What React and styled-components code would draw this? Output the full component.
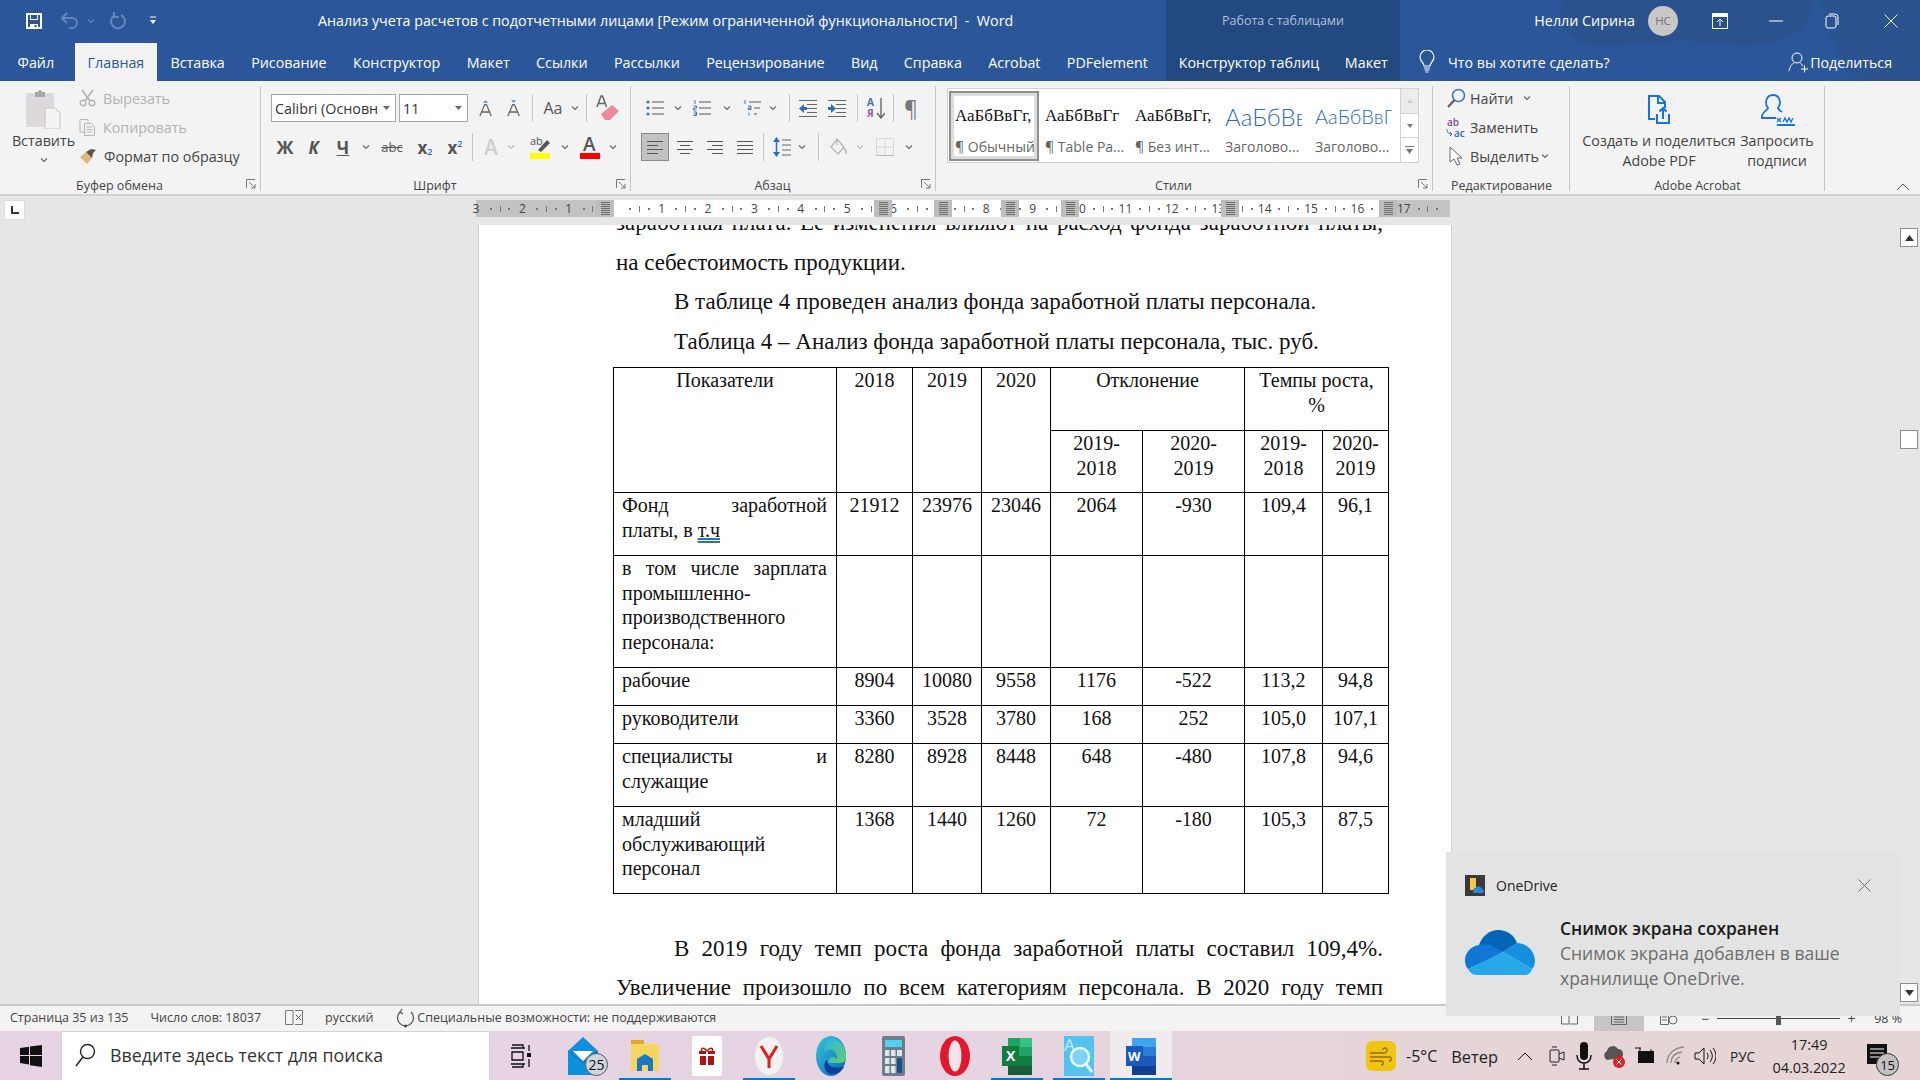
import React from 'react'
import styled, { createGlobalStyle } from 'styled-components'

const UI = `'Open Sans', 'Noto Sans', sans-serif`
const SERIF = `'Liberation Serif', 'Times New Roman', serif`

const Global = createGlobalStyle`
  html, body { margin: 0; padding: 0; background: #e6e6e6; }
  * { box-sizing: border-box; }
`

const Screen = styled.div`
  position: relative;
  width: 1920px;
  height: 1080px;
  overflow: hidden;
  display: flex;
  flex-direction: column;
  font-family: ${UI};
  color: #444;
`

/* ---------- window header ---------- */
const Header = styled.header`
  position: relative;
  height: 81px;
  flex: none;
  background: #2b579a;
  color: #fff;
`
const HeaderArt = styled.svg`
  position: absolute;
  right: 0;
  top: 0;
  pointer-events: none;
`
const TitleRow = styled.div`
  position: relative;
  display: flex;
  height: 43px;
  align-items: stretch;
`
const TabsRow = styled.nav`
  position: relative;
  display: flex;
  height: 38px;
  align-items: stretch;
  font-size: 14.3px;
`
const Qat = styled.div`
  width: 318px;
  display: flex;
  align-items: center;
  padding: 0 0 2px 26px;
  flex: none;
`
const QatItem = styled.span`
  display: flex;
  margin-left: ${p => p.$ml ?? 0}px;
`
const DocTitle = styled.div`
  width: 848px;
  font-size: 14.3px;
  display: flex;
  align-items: center;
  padding-bottom: 2px;
  white-space: nowrap;
  flex: none;
`
const ContextCell = styled.div`
  width: 234px;
  flex: none;
  background: #234a80;
  display: flex;
  align-items: center;
  justify-content: center;
  font-size: 12.5px;
  padding-bottom: 2px;
  color: #aebfd8;
  white-space: nowrap;
`
const ContextTabs = styled(ContextCell)`
  justify-content: flex-start;
  font-size: 14.3px;
  padding-bottom: 0;
  color: #fff;
`
const WinRight = styled.div`
  flex: 1;
  display: flex;
  align-items: center;
  justify-content: flex-end;
  padding-bottom: 2px;
  font-size: 14.3px;
`
const UserName = styled.span`
  margin-right: 13px;
  white-space: nowrap;
`
const Avatar = styled.span`
  width: 30px;
  height: 30px;
  border-radius: 50%;
  background: #c8c8c8;
  color: #757575;
  font-size: 11.5px;
  display: flex;
  align-items: center;
  justify-content: center;
  margin-right: 12px;
`
const WinBtn = styled.span`
  width: ${p => p.$w}px;
  display: flex;
  justify-content: center;
`
const Tab = styled.span`
  padding: 0 ${p => p.$pad ?? 13.2}px;
  margin-right: ${p => p.$mr ?? 0}px;
  display: flex;
  align-items: center;
  white-space: nowrap;
  flex: none;
  ${p => p.$active && `background: #f3f3f3; color: #2b579a; font-weight: 500;`}
`
const TabList = styled.div`
  width: 1166px;
  flex: none;
  display: flex;
  padding-left: 4px;
`
const TellMe = styled.div`
  flex: 1;
  display: flex;
  align-items: center;
  padding-left: 19px;
  gap: 13px;
  font-size: 14.2px;
  white-space: nowrap;
`
const Share = styled.span`
  margin-left: auto;
  margin-right: 28px;
  display: flex;
  align-items: center;
  gap: 2px;
`

/* ---------- ribbon ---------- */
const Ribbon = styled.section`
  position: relative;
  display: flex;
  height: 115px;
  flex: none;
  background: #f3f3f3;
  border-bottom: 2px solid #d4d4d4;
`
const Group = styled.div`
  width: ${p => p.$w}px;
  flex: none;
  position: relative;
  display: flex;
  flex-direction: column;
  padding-top: 5px;
  &::after {
    content: '';
    position: absolute;
    right: 0;
    top: 5px;
    bottom: 3px;
    width: 1px;
    background: #c6c6c6;
  }
`
const GroupBody = styled.div`
  flex: 1;
  display: flex;
  min-height: 0;
  padding-left: ${p => p.$left ?? 0}px;
`
const GroupLabel = styled.div`
  height: 17px;
  display: flex;
  align-items: center;
  justify-content: center;
  font-size: 12.5px;
  color: #444;
  white-space: nowrap;
  padding-right: ${p => p.$shift ?? 0}px;
`
const Launcher = styled.svg`
  position: absolute;
  right: 5px;
  bottom: 5px;
`
const PasteCol = styled.div`
  width: 79px;
  flex: none;
  display: flex;
  flex-direction: column;
  align-items: center;
  padding: 3px 0 0 8px;
  font-size: 14.3px;
  line-height: 20px;
`
const PasteLabel = styled.span`
  margin-top: 2px;
  margin-bottom: 5px;
`
const Stack = styled.div`
  display: flex;
  flex-direction: column;
  padding-top: ${p => p.$top ?? 0}px;
  gap: 5px;
`
const SmallAction = styled.div`
  display: flex;
  align-items: center;
  height: 24px;
  font-size: 14.3px;
  gap: ${p => p.$gap ?? 7}px;
  white-space: nowrap;
  color: ${p => (p.$off ? '#b2b2b2' : '#444')};
`
const IconSlot = styled.span`
  width: ${p => p.$w ?? 18}px;
  display: flex;
  justify-content: center;
  flex: none;
`
const TwoRows = styled.div`
  display: flex;
  flex-direction: column;
  padding: 8px 0 0 ${p => p.$left ?? 0}px;
  gap: 11px;
`
const ToolRow = styled.div`
  display: flex;
  align-items: center;
  height: 28px;
`
const Combo = styled.div`
  width: ${p => p.$w}px;
  height: 28px;
  flex: none;
  margin-right: ${p => p.$mr ?? 0}px;
  background: #fff;
  border: 1px solid #a6a6a6;
  display: flex;
  align-items: center;
  justify-content: space-between;
  padding: 0 4px 0 3px;
  font-size: 14.3px;
  color: #333;
  white-space: nowrap;
  overflow: hidden;
`
const Tool = styled.span`
  width: ${p => p.$w ?? 28}px;
  height: 28px;
  flex: none;
  display: flex;
  align-items: center;
  justify-content: center;
  margin-left: ${p => p.$ml ?? 0}px;
  color: ${p => p.$color ?? '#555'};
  ${p => p.$active && `background: #c2c2c2; border: 1px solid #8a8a8a;`}
`
const Sep = styled.span`
  width: 1px;
  height: 28px;
  flex: none;
  background: #c6c6c6;
  margin-left: ${p => p.$l ?? 4}px;
  margin-right: ${p => p.$r ?? 4}px;
`
const Glyph = styled.span`
  font-family: ${UI};
  font-weight: ${p => p.$weight ?? 700};
  font-style: ${p => (p.$italic ? 'italic' : 'normal')};
  font-size: ${p => p.$size ?? 16}px;
  color: ${p => p.$color ?? '#555'};
  text-decoration: ${p => p.$deco ?? 'none'};
  line-height: 1;
  display: inline-flex;
  align-items: center;
`
const Sub = styled.span`
  font-size: 9px;
  color: #2b6cb0;
  font-weight: 600;
  align-self: ${p => (p.$up ? 'flex-start' : 'flex-end')};
`

/* styles gallery */
const Gallery = styled.div`
  margin: 2px 0 0 11px;
  width: 472px;
  height: 75px;
  background: #fff;
  border: 1px solid #d2d2d2;
  display: flex;
  padding: 2px 0 0 1px;
`
const StyleItem = styled.div`
  width: 90px;
  height: 70px;
  flex: none;
  display: flex;
  flex-direction: column;
  padding: ${p => (p.$active ? '0 2px 0 4px' : '2px 4px 0 6px')};
  overflow: hidden;
  white-space: nowrap;
  ${p => p.$active && `border: 2px solid #8f8f8f; outline: 3px solid #dcdcdc; outline-offset: -5px;`}
`
const StylePreview = styled.div`
  height: 43px;
  width: 77px;
  padding-top: 3px;
  display: flex;
  align-items: center;
  overflow: hidden;
  flex: none;
  font-family: ${p => (p.$heading ? `Lato, sans-serif` : SERIF)};
  font-weight: ${p => (p.$heading ? 300 : 400)};
  font-size: ${p => p.$size}px;
  color: ${p => (p.$heading ? '#2f6bb5' : '#111')};
`
const StyleName = styled.div`
  font-size: 14px;
  color: #666;
  overflow: hidden;
  line-height: 22px;
`
const GalleryScroll = styled.div`
  margin-left: auto;
  width: 18px;
  flex: none;
  margin-top: -2px;
  display: flex;
  flex-direction: column;
  border-left: 1px solid #d2d2d2;
`
const ScrollCell = styled.div`
  flex: 1;
  display: flex;
  align-items: center;
  justify-content: center;
  background: ${p => (p.$off ? '#ececec' : '#fff')};
  border-bottom: 1px solid #d2d2d2;
  &:last-child { border-bottom: none; }
`
const BigBtn = styled.div`
  width: ${p => p.$w}px;
  flex: none;
  display: flex;
  flex-direction: column;
  align-items: center;
  font-size: 14.3px;
  line-height: 20px;
  padding-top: 7px;
  text-align: center;
  white-space: nowrap;
`
const BigIcon = styled.div`
  height: 35px;
  margin-bottom: 3px;
  display: flex;
  align-items: center;
`
const Collapse = styled.svg`
  position: absolute;
  right: 10px;
  bottom: 3px;
`

/* ---------- ruler ---------- */
const RulerRow = styled.div`
  height: 29px;
  flex: none;
  background: #e6e6e6;
  display: flex;
  align-items: flex-start;
  padding-top: 4px;
`
const TabStop = styled.div`
  width: 21px;
  height: 20px;
  margin-left: 4px;
  margin-right: 451px;
  background: #fff;
  border: 1px solid #dcdcdc;
  display: flex;
  align-items: center;
  justify-content: center;
`
const Ruler = styled.div`
  position: relative;
  width: 974px;
  height: 17px;
  display: flex;
  background: linear-gradient(to right, #c3c3c3 0, #c3c3c3 136px, #fff 136px, #fff 913px, #c3c3c3 913px);
  font-size: 12px;
  color: #444;
`
const Cm = styled.span`
  width: 46.4px;
  flex: none;
  display: flex;
  align-items: center;
  justify-content: space-between;
  padding-right: 6px;
  &:first-child { margin-left: -6px; }
`
const RulerNum = styled.span`
  width: 12px;
  display: flex;
  justify-content: center;
  line-height: 17px;
`
const Tick = styled.i`
  width: ${p => (p.$tall ? 1 : 2)}px;
  height: ${p => (p.$tall ? 6 : 2)}px;
  background: #777;
`
const ColMark = styled.span`
  position: absolute;
  top: 0;
  bottom: 0;
  width: 18px;
  background: #bdbdbd;
  display: flex;
  align-items: center;
  justify-content: center;
  &::after {
    content: '';
    width: 9px;
    height: 13px;
    background: repeating-linear-gradient(0deg, #6f6f6f 0 1px, #bbb 1px 2px);
  }
`

/* ---------- document ---------- */
const DocArea = styled.main`
  height: 779px;
  flex: none;
  display: flex;
  background: #e6e6e6;
  overflow: hidden;
`
const Page = styled.article`
  width: 974px;
  margin-left: 478px;
  flex: none;
  background: #fff;
  border-left: 1px solid #d0d0d0;
  border-right: 1px solid #d0d0d0;
  padding-left: 137px;
  padding-right: 68px;
  font-family: ${SERIF};
  color: #111;
  font-size: 23px;
  overflow: hidden;
`
const Para = styled.p`
  margin: ${p => p.$mt ?? 0}px 0 0;
  height: 39.5px;
  line-height: 39.5px;
  white-space: nowrap;
  text-indent: ${p => (p.$indent ? 58 : 0)}px;
  ${p => p.$just && `white-space: normal; text-align: justify; text-align-last: justify;`}
`
const Table = styled.table`
  width: 775px;
  margin: 6px 0 0 -3px;
  border-collapse: collapse;
  table-layout: fixed;
  font-size: 20px;
  line-height: 24.6px;
`
const Cell = styled.td`
  border: 1px solid #000;
  padding: 0 9px;
  vertical-align: top;
  text-align: ${p => (p.$left ? 'justify' : 'center')};
`
const NameCell = styled(Cell)`
  padding-left: 8px;
`
const NumCell = styled(Cell)`
  padding-left: 2px;
  padding-right: 2px;
`
const Row = styled.tr`
  height: ${p => p.$h}px;
`
const Spell = styled.span`
  text-decoration: underline double #2b6cc4;
`
const ScrollBar = styled.aside`
  width: 18px;
  margin-left: auto;
  margin-right: 2px;
  flex: none;
  display: flex;
  flex-direction: column;
  padding: 3px 0 2px;
`
const ScrollBtn = styled.div`
  height: 19px;
  background: #fff;
  border: 1px solid #8e8e8e;
  display: flex;
  align-items: center;
  justify-content: center;
  margin-top: ${p => (p.$auto ? 'auto' : `${p.$mt ?? 0}px`)};
`

/* ---------- status bar ---------- */
const StatusBar = styled.footer`
  height: 27px;
  flex: none;
  background: #f3f3f3;
  border-top: 2px solid #c8c8c8;
  display: flex;
  align-items: center;
  padding: 0 0 2px 10px;
  font-size: 12.5px;
  color: #444;
  white-space: nowrap;
`
const StatusItem = styled.span`
  margin-left: ${p => p.$ml ?? 0}px;
  display: flex;
  align-items: center;
`
const StatusRight = styled.div`
  margin-left: auto;
  margin-bottom: -2px;
  height: calc(100% + 2px);
  display: flex;
  align-items: center;
  padding-right: 18px;
`
const ViewBtn = styled.span`
  width: 50px;
  height: 100%;
  display: flex;
  align-items: center;
  justify-content: center;
  background: ${p => (p.$active ? '#c6c6c6' : 'transparent')};
`
const ZoomSign = styled.span`
  width: 11px;
  margin-left: 6px;
  display: flex;
  justify-content: center;
  font-size: 14px;
  line-height: 1;
`
const Zoomer = styled.span`
  width: 123px;
  height: 1px;
  background: #444;
  margin-left: 6px;
  display: flex;
  justify-content: center;
  align-items: center;
  &::after {
    content: '';
    width: 5px;
    height: 12px;
    background: #555;
  }
`

/* ---------- taskbar ---------- */
const Taskbar = styled.div`
  height: 50px;
  flex: none;
  display: flex;
  background: linear-gradient(to right, #e6d3e4 0, #e6d4e2 50%, #e5d5d6 80%, #e5d5d5 100%);
  color: #222;
`
const StartBtn = styled.div`
  width: 61px;
  flex: none;
  display: flex;
  align-items: center;
  justify-content: center;
`
const Search = styled.div`
  width: 429px;
  flex: none;
  background: #fff;
  border: 1px solid #d8d0d8;
  display: flex;
  align-items: center;
  padding: 0 0 2px 12px;
  gap: 14px;
  font-size: 17.8px;
  color: #333;
  white-space: nowrap;
`
const TaskView = styled.div`
  width: 62px;
  flex: none;
  display: flex;
  align-items: center;
  justify-content: center;
`
const Slot = styled.div`
  position: relative;
  width: 62px;
  flex: none;
  display: flex;
  align-items: center;
  justify-content: center;
  background: ${p => (p.$focus ? '#f2ebed' : 'transparent')};
  &::after {
    content: '';
    position: absolute;
    bottom: 0;
    left: ${p => (p.$focus ? 0 : 5)}px;
    right: ${p => (p.$focus ? 0 : 5)}px;
    height: 3px;
    background: ${p => (p.$on ? '#0078d4' : 'transparent')};
  }
`
const Badge = styled.span`
  position: absolute;
  right: 6px;
  bottom: 5px;
  width: 23px;
  height: 23px;
  border-radius: 50%;
  background: #cfd6de;
  border: 1px solid #555;
  font-size: 14px;
  color: #111;
  display: flex;
  align-items: center;
  justify-content: center;
`
const Tray = styled.div`
  flex: 1;
  display: flex;
  align-items: center;
  padding-left: 194px;
`
const Weather = styled.div`
  width: 30px;
  height: 30px;
  background: #f1c40f;
  border-radius: 6px;
  flex: none;
  display: flex;
  align-items: center;
  justify-content: center;
  margin-right: 10px;
`
const TrayText = styled.span`
  font-size: ${p => p.$size ?? 16}px;
  margin-left: ${p => p.$ml ?? 0}px;
  white-space: nowrap;
`
const TrayIcon = styled.span`
  width: ${p => p.$w ?? 31}px;
  margin-left: ${p => p.$ml ?? 0}px;
  flex: none;
  display: flex;
  justify-content: center;
`
const Clock = styled.div`
  width: 88px;
  margin-left: 10px;
  flex: none;
  text-align: center;
  font-size: 14.4px;
  line-height: 23px;
`
const Notif = styled.span`
  position: relative;
  margin-left: 14px;
  display: flex;
`
const NotifCount = styled.span`
  position: absolute;
  left: 9px;
  top: 9px;
  width: 23px;
  height: 23px;
  border-radius: 50%;
  background: #c5c0c4;
  border: 1px solid #333;
  font-size: 13px;
  color: #111;
  display: flex;
  align-items: center;
  justify-content: center;
`

/* ---------- toast ---------- */
const Toast = styled.div`
  position: absolute;
  left: 1446px;
  top: 852px;
  width: 454px;
  height: 164px;
  background: #e3e3e3;
  padding: 23px 0 0 19px;
  color: #222;
`
const ToastHead = styled.div`
  display: flex;
  align-items: center;
  gap: 11px;
  font-size: 14px;
  height: 20px;
`
const ToastClose = styled.svg`
  margin-left: auto;
  margin-right: 29px;
`
const ToastBody = styled.div`
  display: flex;
  gap: 25px;
  margin-top: 21px;
`
const ToastCloud = styled.div`
  margin-top: 13px;
  flex: none;
`
const ToastTitle = styled.div`
  font-size: 17.3px;
  font-weight: 600;
  color: #1a1a1a;
  line-height: 25px;
  white-space: nowrap;
`
const ToastText = styled.div`
  font-size: 17.5px;
  color: #6d6d6d;
  line-height: 25px;
  white-space: nowrap;
`

/* ---------- icons ---------- */
const Chev = ({ color = '#666', size = 8 }) => (
  <svg width={size} height={size} viewBox="0 0 8 8"><path d="M1 2.500 4 5.500 7 2.500" fill="none" stroke={color} strokeWidth="1.100" /></svg>
)
const CaretDown = ({ color = '#666' }) => (
  <svg width="9" height="6" viewBox="0 0 9 6"><path d="M1 1h7L4.500 5z" fill={color} /></svg>
)
const DialogLaunch = () => (
  <Launcher width="10" height="10" viewBox="0 0 10 10"><path d="M.5 9V.5H9M3 3l6 6M9 5v4H5" fill="none" stroke="#777" strokeWidth="1" /></Launcher>
)
const Save = () => (
  <svg width="16" height="16" viewBox="0 0 16 16"><path d="M1 1h14v14H1z" fill="none" stroke="#fff" strokeWidth="2" /><path d="M4 1h8v6H4zM4 11h8v4H4z" fill="#fff" /><path d="M8.500 12h2v2h-2z" fill="#2b579a" /><path d="M5 2h6v4H5z" fill="#2b579a" /></svg>
)
const Undo = () => (
  <svg width="20" height="18" viewBox="0 0 20 18"><path d="M3 6h9a5 5 0 0 1 0 10H9" fill="none" stroke="#6487bb" strokeWidth="2" /><path d="M7 1 2 6l5 5" fill="none" stroke="#6487bb" strokeWidth="2" /></svg>
)
const Redo = () => (
  <svg width="18" height="18" viewBox="0 0 18 18"><path d="M12 3a7 7 0 1 1-6 0" fill="none" stroke="#6487bb" strokeWidth="2.200" /><path d="M5 0v5h5" fill="none" stroke="#6487bb" strokeWidth="2" /></svg>
)
const QatMore = () => (
  <svg width="8" height="9" viewBox="0 0 8 9"><path d="M1 1h6" stroke="#fff" /><path d="M1 4h6L4 8z" fill="#fff" /></svg>
)
const RibbonDisplay = () => (
  <svg width="16" height="16" viewBox="0 0 16 16"><path d="M.5.5h15v15H.5z" fill="none" stroke="#fff" /><path d="M1 1h14v3H1z" fill="#fff" /><path d="M8 13V6M5 9l3-3 3 3" fill="none" stroke="#fff" /></svg>
)
const Minimize = () => <svg width="14" height="2" viewBox="0 0 14 2"><path d="M0 1h14" stroke="#fff" /></svg>
const Restore = () => (
  <svg width="14" height="16" viewBox="0 0 14 16"><rect x="1" y="3" width="10" height="12" rx="2" fill="none" stroke="#fff" /><path d="M4 1h6a3 3 0 0 1 3 3v8" fill="none" stroke="#fff" /></svg>
)
const CloseX = ({ color = '#fff', size = 14 }) => (
  <svg width={size} height={size} viewBox="0 0 14 14"><path d="M.5.5l13 13M13.500.5l-13 13" stroke={color} /></svg>
)
const Bulb = () => (
  <svg width="16" height="24" viewBox="0 0 16 24"><path d="M5 16c0-3-4-5-4-9a7 7 0 0 1 14 0c0 4-4 6-4 9z" fill="none" stroke="#fff" strokeWidth="1.200" /><path d="M5 18h6M5.500 20h5M6.500 22h3" stroke="#fff" /></svg>
)
const ShareIcon = () => (
  <svg width="20" height="22" viewBox="0 0 20 22"><circle cx="9" cy="7" r="5" fill="none" stroke="#fff" /><path d="M1 20c1-5 3-7 5-8M12 12c1 .5 2 1.500 3 3M13 18h7M16.500 14.500v7" fill="none" stroke="#fff" /></svg>
)
const PasteIcon = () => (
  <svg width="36" height="40" viewBox="0 0 36 40"><path d="M0 4h28v34H0z" fill="#dcd8dc" /><path d="M9 3h3a2 2 0 0 1 4 0h3v5H9z" fill="#a9a6a9" /><path d="M19 19h10l5 5v16H19z" fill="#f4f2f4" stroke="#c6c4c6" /></svg>
)
const Scissors = () => (
  <svg width="17" height="18" viewBox="0 0 17 18"><circle cx="4" cy="14" r="2.800" fill="none" stroke="#b4b4b4" strokeWidth="1.400" /><circle cx="13" cy="14" r="2.800" fill="none" stroke="#b4b4b4" strokeWidth="1.400" /><path d="M3 1l8 11M14 1 6 12" stroke="#b4b4b4" strokeWidth="1.800" /></svg>
)
const CopyIcon = () => (
  <svg width="17" height="17" viewBox="0 0 17 17"><path d="M1 .5h8v3M1 .5V13h4" fill="none" stroke="#b4b4b4" /><path d="M5.500 4.500h7l3 3v9h-10zM7.500 8h6M7.500 10.500h6M7.500 13h6" fill="none" stroke="#b4b4b4" /></svg>
)
const Brush = () => (
  <svg width="18" height="17" viewBox="0 0 18 17"><path d="M1 9l6-5 6 6-5 6z" fill="#e3b56e" /><path d="M7 4l5-3 5 1-3 3-1 5z" fill="#555" /></svg>
)
const FontGrow = ({ up }) => (
  <svg width="14" height="19" viewBox="0 0 16 19">
    <path d="M1 18 6.500 5h2L14 18M3.500 13.500h8" fill="none" stroke="#666" strokeWidth="1.500" />
    <path d={up ? 'M7.500 0l3 3h-6z' : 'M4.500 0h6l-3 3z'} fill="#5b8ac5" />
  </svg>
)
const Eraser = () => (
  <svg width="24" height="26" viewBox="0 0 24 26"><path d="M1 12 5 1h1.500l4 11M2.500 8.500h6.500" fill="none" stroke="#666" strokeWidth="1.500" /><path d="M5 19l11-9 7 6-9 9H9z" fill="#ea8a9a" /></svg>
)
const ListBullet = () => (
  <svg width="18" height="16" viewBox="0 0 18 16"><circle cx="2" cy="2" r="1.600" fill="#3f74b8" /><circle cx="2" cy="8" r="1.600" fill="#3f74b8" /><circle cx="2" cy="14" r="1.600" fill="#3f74b8" /><path d="M6 2h12M6 8h12M6 14h12" stroke="#555" /></svg>
)
const ListNumber = () => (
  <svg width="18" height="16" viewBox="0 0 18 16"><path d="M6 2h12M6 8h12M6 14h12" stroke="#555" /><path d="M2 .5v3.500M1 1.500l1-1M.5 6h3v2h-3v2h3M.5 12h3v3.500h-3M1 14h2" fill="none" stroke="#3f74b8" /></svg>
)
const ListMulti = () => (
  <svg width="18" height="16" viewBox="0 0 18 16"><path d="M6 2h12M11 8h6M11 14h3" stroke="#555" /><path d="M2 .5v3.500M1 1.500l1-1" fill="none" stroke="#3f74b8" /><path d="M5 6h3v3.500H5V8h3M6 12.500v3" fill="none" stroke="#3f74b8" /></svg>
)
const Indent = ({ out }) => (
  <svg width="18" height="17" viewBox="0 0 18 17">
    <path d="M0 .5h18M8 4.500h10M8 8.500h10M8 12.500h10M0 16.500h18" stroke="#666" />
    <path d={out ? 'M0 8.500 5 4v3h3v3H5v3z' : 'M8 8.500 3 4v3H0v3h3v3z'} fill="#2f6db5" />
  </svg>
)
const Sort = () => (
  <svg width="18" height="21" viewBox="0 0 18 21">
    <path d="M14 0v19M10 15l4 5 4-5" fill="none" stroke="#666" strokeWidth="1.400" />
    <text x="0" y="8" fontFamily="Open Sans" fontSize="10" fontWeight="700" fill="#3f74b8">A</text>
    <text x="0" y="19" fontFamily="Open Sans" fontSize="10" fontWeight="700" fill="#8a5cb0">Я</text>
  </svg>
)
const ALIGN_LINES = {
  left: 'M0 .5h16M0 4.500h11M0 8.500h16M0 12.500h11',
  center: 'M0 .5h16M3 4.500h10M0 8.500h16M3 12.500h10',
  right: 'M0 .5h16M5 4.500h11M0 8.500h16M5 12.500h11',
  just: 'M0 .5h16M0 4.500h16M0 8.500h16M0 12.500h16',
}
const Align = ({ mode }) => (
  <svg width="16" height="13" viewBox="0 0 16 13"><path d={ALIGN_LINES[mode]} stroke="#555" /></svg>
)
const LineSpacing = () => (
  <svg width="18" height="20" viewBox="0 0 18 20">
    <path d="M3.500 3v14" stroke="#2f6db5" strokeWidth="1.500" /><path d="M0 5l3.500-5L7 5zM0 15l3.500 5L7 15z" fill="#2f6db5" />
    <path d="M9 3h9M9 8h9M9 13h9M9 18h9" stroke="#666" />
  </svg>
)
const Shading = () => (
  <svg width="17" height="19" viewBox="0 0 17 19"><path d="M7 1 1 9l7 7 6-7zM7 1v6" fill="none" stroke="#b6b6b6" strokeWidth="1.300" /><path d="M14 10c2 3 3 4 2 6" fill="none" stroke="#b6b6b6" strokeWidth="1.500" /></svg>
)
const Borders = () => (
  <svg width="18" height="18" viewBox="0 0 18 18"><path d="M.5.5h17v17H.5zM9 .5v17M.5 9h17" fill="none" stroke="#c4b6c8" strokeDasharray="1 1" /><path d="M0 17.500h18" stroke="#b8b8b8" /></svg>
)
const Find = () => (
  <svg width="19" height="20" viewBox="0 0 19 20"><circle cx="11.500" cy="7.500" r="6" fill="none" stroke="#3f74b8" strokeWidth="1.600" /><path d="M7.500 12 1 19" stroke="#555" strokeWidth="2" /></svg>
)
const Replace = () => (
  <svg width="20" height="21" viewBox="0 0 20 21">
    <text x="1" y="9" fontFamily="Open Sans" fontSize="10" fontWeight="600" fill="#7a4b9c">ab</text>
    <text x="8" y="20" fontFamily="Open Sans" fontSize="10" fontWeight="600" fill="#2f6db5">ac</text>
    <path d="M1 12c0 4 2 5 5 5M4 15l2 2-2 2" fill="none" stroke="#2f6db5" />
  </svg>
)
const Pointer = () => (
  <svg width="14" height="20" viewBox="0 0 14 20"><path d="M1 1v15l4-3 3 6 3-1-3-6h5z" fill="#fff" stroke="#666" /></svg>
)
const AcrobatShare = () => (
  <svg width="24" height="32" viewBox="0 0 24 32"><path d="M8 24H2V1h10l6 6v6" fill="none" stroke="#1473e6" strokeWidth="2" /><path d="M11 1v7h7" fill="none" stroke="#1473e6" strokeWidth="2" /><path d="M10 19v9h12v-9M16 24V13M12.500 16.500 16 13l3.500 3.500" fill="none" stroke="#1473e6" strokeWidth="2" /></svg>
)
const AcrobatSign = () => (
  <svg width="36" height="34" viewBox="0 0 36 34"><path d="M3 22c0-4 5-5 6-8-3-3-3-13 5-13s8 10 5 13c1 2 2 3 4 4M3 22v2h14" fill="none" stroke="#1473e6" strokeWidth="1.800" /><path d="M18 31h18" stroke="#1473e6" strokeWidth="2" /><path d="M18 24l4 4M22 24l-4 4M24 28l2-4 2 4 2-4 2 4 2-4" fill="none" stroke="#1473e6" strokeWidth="1.300" /></svg>
)
const WinLogo = () => (
  <svg width="22" height="22" viewBox="0 0 22 22"><path d="M0 3l9-1.300V10H0zM10 1.600 22 0v10H10zM0 11h9v8.500L0 18zM10 11h12v11l-12-1.700z" fill="#111" /></svg>
)
const SearchIcon = () => (
  <svg width="22" height="24" viewBox="0 0 22 24"><circle cx="13.500" cy="8.500" r="7" fill="none" stroke="#222" strokeWidth="1.400" /><path d="M9 14 2 23" stroke="#222" strokeWidth="1.500" /></svg>
)
const TaskViewIcon = () => (
  <svg width="21" height="24" viewBox="0 0 21 24"><path d="M1 1h11v3M1 23h11v-3M1 8h11v8H1z" fill="none" stroke="#111" strokeWidth="1.300" /><path d="M0 4h14M0 20h14M18 1v6M18 15v8" stroke="#111" strokeWidth="1.300" /><rect x="16" y="9" width="4" height="4" fill="#111" /></svg>
)
const MailIcon = () => (
  <svg width="30" height="38" viewBox="0 0 30 38"><path d="M0 14 15 0l15 14v24H0z" fill="#0f8fe0" /><path d="M5 14h20L15 24z" fill="#fff" /><path d="M0 14l15 12 15-12" fill="none" stroke="#0a6cb8" /></svg>
)
const FolderIcon = () => (
  <svg width="28" height="32" viewBox="0 0 28 32"><path d="M0 0h13v5H0z" fill="#e0a52c" /><path d="M0 4h28v27H0z" fill="#f7d55e" /><path d="M6 31V19l8-5 8 5v12h-5v-6h-6v6z" fill="#1a78c8" /></svg>
)
const GiftIcon = () => (
  <svg width="30" height="40" viewBox="0 0 30 40"><path d="M0 0h30v40H0z" fill="#fff" /><path d="M7 15h16v3H7zM8 20h14v9H8z" fill="#b40f12" /><path d="M14 15h2v14h-2z" fill="#fff" /><path d="M15 15c-4-5-7-2-5 0M15 15c4-5 7-2 5 0" fill="none" stroke="#b40f12" strokeWidth="1.500" /></svg>
)
const YandexIcon = () => (
  <svg width="30" height="40" viewBox="0 0 30 40"><ellipse cx="15" cy="20" rx="14.500" ry="19.500" fill="#f4f2f0" stroke="#ddd" /><path d="M7 10l8 13v9M23 10l-8 13" fill="none" stroke="#e01b22" strokeWidth="3" /></svg>
)
const EdgeIcon = () => (
  <svg width="30" height="40" viewBox="0 0 30 40">
    <defs><linearGradient id="edg" x1="0" y1="0" x2="1" y2="1"><stop offset="0" stopColor="#36c6e0" /><stop offset="1" stopColor="#0f5fb4" /></linearGradient><linearGradient id="edg2" x1="0" y1="0" x2="1" y2="1"><stop offset="0" stopColor="#2bb5e8" /><stop offset="1" stopColor="#5fd06c" /></linearGradient></defs>
    <ellipse cx="15" cy="20" rx="15" ry="20" fill="url(#edg)" />
    <path d="M14 2c9 0 16 8 16 18 0 5-2 7-7 7H13c-1-7 6-8 8-3 1-8-6-14-13-8C9 8 11 3 14 2z" fill="url(#edg2)" />
    <path d="M11 24c0 6 6 9 17 7-4 6-11 9-16 6-4-3-5-10-1-13z" fill="#0b3f9a" />
  </svg>
)
const CalcIcon = () => (
  <svg width="23" height="40" viewBox="0 0 23 40"><rect width="23" height="40" rx="2" fill="#6f7d8a" /><path d="M3 4h17v7H3z" fill="#52d0ee" /><path d="M3 14h4.500v6H3zM9 14h4.500v6H9zM15 14h5v6h-5zM3 22h4.500v6H3zM9 22h4.500v6H9zM3 30h4.500v7H3zM9 30h4.500v7H9z" fill="#dfe6ea" /><path d="M15 22h5v15h-5z" fill="#1a4f8e" /></svg>
)
const OperaIcon = () => (
  <svg width="30" height="40" viewBox="0 0 30 40"><ellipse cx="15" cy="20" rx="15" ry="20" fill="#e3162b" /><ellipse cx="15" cy="20" rx="6.500" ry="15.500" fill="#f2e4e8" /></svg>
)
const ExcelIcon = () => (
  <svg width="30" height="37" viewBox="0 0 30 37"><path d="M6 0h24v37H6z" fill="#21a366" /><path d="M18 0h12v9H18z" fill="#33c481" /><path d="M18 18h12v10H18z" fill="#107c41" /><path d="M6 18h12v10H6z" fill="#185c37" opacity=".6" /><path d="M6 28h24v9H6z" fill="#185c37" /><path d="M0 8h17v20H0z" fill="#107c41" /><text x="4" y="23" fontFamily="Open Sans" fontWeight="700" fontSize="14" fill="#fff">X</text></svg>
)
const LensIcon = () => (
  <svg width="30" height="40" viewBox="0 0 30 40"><path d="M0 0h30v40H0z" fill="#55c3ee" /><text x="0" y="15" fontFamily="Open Sans" fontSize="17" fill="#c9eefb">A</text><circle cx="16" cy="21" r="9" fill="#7dd3f2" stroke="#e8f8fe" strokeWidth="2.500" /><path d="M22 28l6 8" stroke="#e8f8fe" strokeWidth="3" /></svg>
)
const WordIcon = () => (
  <svg width="30" height="37" viewBox="0 0 30 37"><path d="M6 0h24v37H6z" fill="#2b7cd3" /><path d="M6 0h24v9H6z" fill="#41a5ee" /><path d="M6 18h24v10H6z" fill="#185abd" /><path d="M6 28h24v9H6z" fill="#103f91" /><path d="M0 8h17v20H0z" fill="#185abd" /><text x="2" y="23" fontFamily="Open Sans" fontWeight="700" fontSize="13" fill="#fff">W</text></svg>
)
const WindIcon = () => (
  <svg width="24" height="20" viewBox="0 0 24 20"><path d="M1 7h14c4 0 4-5 1-5-2 0-2 2-2 2M1 11h19c3 0 3 4 0 4M1 15h11c3 0 3 4 0 4" fill="none" stroke="#8a6d10" strokeWidth="1.300" /></svg>
)
const MeetIcon = () => (
  <svg width="16" height="22" viewBox="0 0 16 22"><rect x="1" y="5" width="9" height="12" rx="1" fill="none" stroke="#222" /><path d="M10 9l5-2v8l-5-2M3 2h5M3 20h5" fill="none" stroke="#222" /></svg>
)
const MicIcon = () => (
  <svg width="16" height="28" viewBox="0 0 16 28"><rect x="4" y="0" width="8" height="18" rx="4" fill="#111" /><path d="M1 13c0 5 3 8 7 8s7-3 7-8M8 21v6M3 27h10" fill="none" stroke="#111" strokeWidth="1.500" /></svg>
)
const CloudErr = () => (
  <svg width="22" height="26" viewBox="0 0 22 26"><path d="M3 17a5 5 0 0 1 0-9 6 6 0 0 1 11-2 5 5 0 0 1 3 9z" fill="#555" /><circle cx="15" cy="19" r="6" fill="#d8232a" /><path d="M12.500 16.500l5 5M17.500 16.500l-5 5" stroke="#fff" /></svg>
)
const BatteryIcon = () => (
  <svg width="20" height="18" viewBox="0 0 20 18"><rect x="3" y="4" width="16" height="12" fill="#111" /><path d="M0 1h6M5 4V1M16 2v2" stroke="#111" /></svg>
)
const WifiIcon = () => (
  <svg width="20" height="20" viewBox="0 0 20 20"><path d="M1 17C1 8 8 2 18 1M5 17c0-6 4-10 11-11M9 17c0-3 2-5 5-6" fill="none" stroke="#888" strokeWidth="1.300" /><circle cx="12" cy="17" r="1.500" fill="#111" /></svg>
)
const VolumeIcon = () => (
  <svg width="22" height="20" viewBox="0 0 22 20"><path d="M1 7h4l5-5v16l-5-5H1z" fill="none" stroke="#111" /><path d="M13 7c1.500 2 1.500 4 0 6M16 4c3 4 3 8 0 12M19 2c4 5 4 11 0 16" fill="none" stroke="#111" /></svg>
)
const NoteIcon = () => (
  <svg width="20" height="24" viewBox="0 0 20 24"><path d="M0 0h20v20H0z" fill="#111" /><path d="M3 5h14M3 9h14M3 13h10" stroke="#fff" /></svg>
)
const OneDriveTile = () => (
  <svg width="20" height="21" viewBox="0 0 20 21"><path d="M0 0h20v21H0z" fill="#3a3a3a" /><path d="M5 3h6v12H5z" fill="#f2c94c" /><path d="M9 18a3 3 0 0 1 1-5 4 4 0 0 1 7 1 2 2 0 0 1 0 4z" fill="#2b88d8" /></svg>
)
const Cloud = () => (
  <svg width="70" height="46" viewBox="0 0 70 46">
    <path d="M14 16C17 7 25 1 33 1c9 0 16 5 19 13l-14 9z" fill="#0364b8" />
    <path d="M14 16C6 17 0 24 0 31c0 4 1 7 3 9l24-11 11-6-12-7c-4-1-8-1-12 0z" fill="#0f78d4" />
    <path d="M52 14c9 0 17 7 18 17 0 4-1 7-3 9L38 23z" fill="#1490df" />
    <path d="M38 23 3 40c2 4 5 6 9 6h48c3 0 6-2 7-6z" fill="#28a8ea" />
  </svg>
)
const Book = () => (
  <svg width="18" height="16" viewBox="0 0 18 16"><path d="M8 .5H.5v14H8zM10 .5h7.500v14H10" fill="none" stroke="#777" /><path d="M11 5l5 5M16 5l-5 5" stroke="#555" /></svg>
)
const Access = () => (
  <svg width="19" height="20" viewBox="0 0 19 20"><path d="M4 4a8 8 0 1 0 11 0M6 1l-2 3 3 2" fill="none" stroke="#555" strokeWidth="1.300" /><circle cx="9.500" cy="18" r="1.500" fill="#444" /></svg>
)

/* ---------- data ---------- */
const TABS = ['Вставка', 'Рисование', 'Конструктор', 'Макет', 'Ссылки', 'Рассылки', 'Рецензирование', 'Вид', 'Справка', 'Acrobat', 'PDFelement']
const RULER_NUMS = ['3', '2', '1', '', '1', '2', '3', '4', '5', '6', '7', '8', '9', '10', '11', '12', '13', '14', '15', '16', '17']
const RULER_MARKS = [120, 398, 458, 525, 585, 745, 903]

const STYLES = [
  { preview: 'АаБбВвГг,', name: '¶ Обычный', size: 17, active: true },
  { preview: 'АаБбВвГг', name: '¶ Table Pa...', size: 17 },
  { preview: 'АаБбВвГг,', name: '¶ Без инт...', size: 17 },
  { preview: 'АаБбВв', name: 'Заголово...', size: 24, heading: true },
  { preview: 'АаБбВвГ', name: 'Заголово...', size: 20, heading: true },
]

const YEAR_HEAD = [['2019-', '2018'], ['2020-', '2019'], ['2019-', '2018'], ['2020-', '2019']]

const DATA_ROWS = [
  { h: 63, name: <>Фонд заработной платы, в <Spell>т.ч</Spell></>, vals: ['21912', '23976', '23046', '2064', '-930', '109,4', '96,1'] },
  { h: 112, name: 'в том числе зарплата промышленно-производственного персонала:', vals: ['', '', '', '', '', '', ''] },
  { h: 38, name: 'рабочие', vals: ['8904', '10080', '9558', '1176', '-522', '113,2', '94,8'] },
  { h: 38, name: 'руководители', vals: ['3360', '3528', '3780', '168', '252', '105,0', '107,1'] },
  { h: 63, name: 'специалисты и служащие', vals: ['8280', '8928', '8448', '648', '-480', '107,8', '94,6'] },
  { h: 87, name: 'младший обслуживающий персонал', vals: ['1368', '1440', '1260', '72', '-180', '105,3', '87,5'] },
]

const COLS = [223, 76, 69, 69, 92, 102, 78, 66]

const SLOTS = [
  { key: 'mail', icon: <MailIcon />, badge: '25' },
  { key: 'folder', icon: <FolderIcon />, on: true },
  { key: 'gift', icon: <GiftIcon /> },
  { key: 'yandex', icon: <YandexIcon />, on: true },
  { key: 'edge', icon: <EdgeIcon /> },
  { key: 'calc', icon: <CalcIcon /> },
  { key: 'opera', icon: <OperaIcon /> },
  { key: 'excel', icon: <ExcelIcon />, on: true },
  { key: 'lens', icon: <LensIcon />, on: true },
  { key: 'word', icon: <WordIcon />, on: true, focus: true },
]

const App = () => (
  <Screen>
    <Global />
    <Header>
      <HeaderArt width="620" height="81" viewBox="0 0 620 81">
        <path d="M262 0c-6 22 8 44 30 46 40 2 70-8 110-4 40 4 60 8 88-6 16-8 22-22 22-36z" fill="#2d4f85" opacity=".6" />
        <path d="M520 0c6 14 4 28 12 40 6 12 10 30 30 41h58V0z" fill="#2d4f85" opacity=".45" />
      </HeaderArt>
      <TitleRow>
        <Qat>
          <QatItem><Save /></QatItem>
          <QatItem $ml={18}><Undo /></QatItem>
          <QatItem $ml={7}><Chev color="#6487bb" /></QatItem>
          <QatItem $ml={14}><Redo /></QatItem>
          <QatItem $ml={22}><QatMore /></QatItem>
        </Qat>
        <DocTitle>Анализ учета расчетов с подотчетными лицами [Режим ограниченной функциональности]&nbsp; -&nbsp; Word</DocTitle>
        <ContextCell>Работа с таблицами</ContextCell>
        <WinRight>
          <UserName>Нелли Сирина</UserName>
          <Avatar>НС</Avatar>
          <WinBtn $w={60}><RibbonDisplay /></WinBtn>
          <WinBtn $w={52}><Minimize /></WinBtn>
          <WinBtn $w={60}><Restore /></WinBtn>
          <WinBtn $w={58}><CloseX /></WinBtn>
        </WinRight>
      </TitleRow>
      <TabsRow>
        <TabList>
          <Tab $pad={13.5} $mr={7}>Файл</Tab>
          <Tab $active $pad={13}>Главная</Tab>
          {TABS.map(t => <Tab key={t}>{t}</Tab>)}
        </TabList>
        <ContextTabs>
          <Tab $pad={12.8}>Конструктор таблиц</Tab>
          <Tab $pad={12.8}>Макет</Tab>
        </ContextTabs>
        <TellMe>
          <Bulb />
          Что вы хотите сделать?
          <Share><ShareIcon />Поделиться</Share>
        </TellMe>
      </TabsRow>
    </Header>

    <Ribbon>
      <Group $w={261}>
        <GroupBody>
          <PasteCol>
            <PasteIcon />
            <PasteLabel>Вставить</PasteLabel>
            <Chev />
          </PasteCol>
          <Stack>
            <SmallAction $off><Scissors />Вырезать</SmallAction>
            <SmallAction $off><CopyIcon />Копировать</SmallAction>
            <SmallAction><Brush />Формат по образцу</SmallAction>
          </Stack>
        </GroupBody>
        <GroupLabel $shift={22}>Буфер обмена</GroupLabel>
        <DialogLaunch />
      </Group>

      <Group $w={370}>
        <GroupBody>
          <TwoRows $left={10}>
            <ToolRow>
              <Combo $w={125} $mr={3}>Calibri (Основн <CaretDown /></Combo>
              <Combo $w={69}>11 <CaretDown /></Combo>
              <Tool $ml={4}><FontGrow up /></Tool>
              <Tool><FontGrow /></Tool>
              <Sep />
              <Tool $w={32}><Glyph $size={16} $weight={500}>Aa</Glyph></Tool>
              <Tool $w={12}><Chev /></Tool>
              <Sep $l={5} $r={5} />
              <Tool $w={31}><Eraser /></Tool>
            </ToolRow>
            <ToolRow>
              <Tool><Glyph $size={18}>Ж</Glyph></Tool>
              <Tool $w={29}><Glyph $size={17} $italic>К</Glyph></Tool>
              <Tool $w={30}><Glyph $size={17} $deco="underline">Ч</Glyph></Tool>
              <Tool $w={16}><Chev /></Tool>
              <Tool $w={36}><Glyph $size={13} $weight={400} $deco="line-through">abc</Glyph></Tool>
              <Tool $w={30}><Glyph $size={17}>x<Sub>2</Sub></Glyph></Tool>
              <Tool $w={30}><Glyph $size={17}>x<Sub $up>2</Sub></Glyph></Tool>
              <Sep $l={2} />
              <Tool><Glyph $size={21} $weight={600} $color="#cfcfcf">A</Glyph></Tool>
              <Tool $w={12}><Chev color="#bbb" /></Tool>
              <Tool $w={32} $ml={8}>
                <svg width="22" height="24" viewBox="0 0 22 24"><path d="M0 18h20v6H0z" fill="#ff0" /><text x="0" y="10" fontFamily="Open Sans" fontSize="11" fill="#555">ab</text><path d="M8 15 17 5l3 3-9 9z" fill="#555" /></svg>
              </Tool>
              <Tool $w={16}><Chev /></Tool>
              <Tool $w={32} $ml={1}>
                <svg width="20" height="24" viewBox="0 0 20 24"><text x="3" y="16" fontFamily="Open Sans" fontSize="19" fontWeight="600" fill="#555">A</text><path d="M0 18h20v6H0z" fill="#f00" /></svg>
              </Tool>
              <Tool $w={14}><Chev /></Tool>
            </ToolRow>
          </TwoRows>
        </GroupBody>
        <GroupLabel $shift={22}>Шрифт</GroupLabel>
        <DialogLaunch />
      </Group>

      <Group $w={305}>
        <GroupBody>
          <TwoRows $left={8}>
            <ToolRow>
              <Tool $w={32}><ListBullet /></Tool>
              <Tool $w={14}><Chev /></Tool>
              <Tool $w={34}><ListNumber /></Tool>
              <Tool $w={16}><Chev /></Tool>
              <Tool $w={27} $ml={3}><ListMulti /></Tool>
              <Tool $w={16}><Chev /></Tool>
              <Sep $l={8} $r={8} />
              <Tool $w={20}><Indent out /></Tool>
              <Tool $w={38}><Indent /></Tool>
              <Sep $l={1} $r={1} />
              <Tool $w={34}><Sort /></Tool>
              <Sep $l={0} $r={0} />
              <Tool $w={34}><Glyph $size={21} $weight={400} $color="#777">¶</Glyph></Tool>
            </ToolRow>
            <ToolRow>
              <Tool $active $w={28} $ml={2}><Align mode="left" /></Tool>
              <Tool $w={32}><Align mode="center" /></Tool>
              <Tool $w={28}><Align mode="right" /></Tool>
              <Tool $w={32}><Align mode="just" /></Tool>
              <Sep $l={2} $r={2} />
              <Tool $w={32}><LineSpacing /></Tool>
              <Tool $w={8}><Chev /></Tool>
              <Sep $l={12} $r={5} />
              <Tool $w={28}><Shading /></Tool>
              <Tool $w={16}><Chev color="#bbb" /></Tool>
              <Tool $w={34}><Borders /></Tool>
              <Tool $w={14}><Chev /></Tool>
            </ToolRow>
          </TwoRows>
        </GroupBody>
        <GroupLabel $shift={22}>Абзац</GroupLabel>
        <DialogLaunch />
      </Group>

      <Group $w={497}>
        <GroupBody>
          <Gallery>
            {STYLES.map(s => (
              <StyleItem key={s.name + s.size} $active={s.active}>
                <StylePreview $size={s.size} $heading={s.heading}>{s.preview}</StylePreview>
                <StyleName>{s.name}</StyleName>
              </StyleItem>
            ))}
            <GalleryScroll>
              <ScrollCell $off><svg width="8" height="6" viewBox="0 0 8 6"><path d="M4 1l3 4H1z" fill="#ccc" /></svg></ScrollCell>
              <ScrollCell><svg width="8" height="6" viewBox="0 0 8 6"><path d="M4 5 1 1h6z" fill="#777" /></svg></ScrollCell>
              <ScrollCell><svg width="9" height="9" viewBox="0 0 9 9"><path d="M0 .5h9" stroke="#777" /><path d="M1 3h7L4.500 8z" fill="#777" /></svg></ScrollCell>
            </GalleryScroll>
          </Gallery>
        </GroupBody>
        <GroupLabel $shift={22}>Стили</GroupLabel>
        <DialogLaunch />
      </Group>

      <Group $w={137}>
        <GroupBody $left={11}>
          <Stack>
            <SmallAction $gap={2}><IconSlot $w={24}><Find /></IconSlot>Найти<IconSlot $w={24}><Chev /></IconSlot></SmallAction>
            <SmallAction $gap={2}><IconSlot $w={24}><Replace /></IconSlot>Заменить</SmallAction>
            <SmallAction $gap={2}><IconSlot $w={24}><Pointer /></IconSlot>Выделить<Chev /></SmallAction>
          </Stack>
        </GroupBody>
        <GroupLabel>Редактирование</GroupLabel>
      </Group>

      <Group $w={255}>
        <GroupBody $left={4}>
          <BigBtn $w={170}>
            <BigIcon><AcrobatShare /></BigIcon>
            Создать и поделиться<br />Adobe PDF
          </BigBtn>
          <BigBtn $w={66}>
            <BigIcon><AcrobatSign /></BigIcon>
            Запросить<br />подписи
          </BigBtn>
        </GroupBody>
        <GroupLabel>Adobe Acrobat</GroupLabel>
      </Group>

      <Collapse width="14" height="8" viewBox="0 0 14 8"><path d="M1 7l6-6 6 6" fill="none" stroke="#555" /></Collapse>
    </Ribbon>

    <RulerRow>
      <TabStop>
        <svg width="8" height="8" viewBox="0 0 8 8"><path d="M1 0v7h7" fill="none" stroke="#333" strokeWidth="2" /></svg>
      </TabStop>
      <Ruler>
        {RULER_NUMS.map((n, i) => (
          <Cm key={i}>
            <RulerNum>{n}</RulerNum>
            <Tick />
            <Tick $tall />
            <Tick />
          </Cm>
        ))}
        {RULER_MARKS.map(x => <ColMark key={x} style={{ left: x }} />)}
      </Ruler>
    </RulerRow>

    <DocArea>
      <Page>
        <Para $mt={-22} $just>заработная плата. Ее изменения влияют на расход фонда заработной платы,</Para>
        <Para>на себестоимость продукции.</Para>
        <Para $indent>В таблице 4 проведен анализ фонда заработной платы персонала.</Para>
        <Para $indent>Таблица 4 – Анализ фонда заработной платы персонала, тыс. руб.</Para>
        <Table>
          <colgroup>
            {COLS.map((w, i) => <col key={i} width={w} />)}
          </colgroup>
          <tbody>
            <Row $h={63}>
              <Cell rowSpan={2}>Показатели</Cell>
              <NumCell rowSpan={2}>2018</NumCell>
              <NumCell rowSpan={2}>2019</NumCell>
              <NumCell rowSpan={2}>2020</NumCell>
              <Cell colSpan={2}>Отклонение</Cell>
              <Cell colSpan={2}>Темпы роста, %</Cell>
            </Row>
            <Row $h={62}>
              {YEAR_HEAD.map((y, i) => <NumCell key={i}>{y[0]}<br />{y[1]}</NumCell>)}
            </Row>
            {DATA_ROWS.map((r, i) => (
              <Row key={i} $h={r.h}>
                <NameCell $left>{r.name}</NameCell>
                {r.vals.map((v, j) => <NumCell key={j}>{v}</NumCell>)}
              </Row>
            ))}
          </tbody>
        </Table>
        <Para $mt={35} $indent $just>В 2019 году темп роста фонда заработной платы составил 109,4%.</Para>
        <Para $mt={-1} $just>Увеличение произошло по всем категориям персонала. В 2020 году темп</Para>
      </Page>
      <ScrollBar>
        <ScrollBtn><svg width="9" height="6" viewBox="0 0 9 6"><path d="M4.500 0 9 6H0z" fill="#333" /></svg></ScrollBtn>
        <ScrollBtn $mt={183} />
        <ScrollBtn $auto><svg width="9" height="6" viewBox="0 0 9 6"><path d="M4.500 6 0 0h9z" fill="#333" /></svg></ScrollBtn>
      </ScrollBar>
    </DocArea>

    <StatusBar>
      <StatusItem>Страница 35 из 135</StatusItem>
      <StatusItem $ml={22}>Число слов: 18037</StatusItem>
      <StatusItem $ml={24}><Book /></StatusItem>
      <StatusItem $ml={22}>русский</StatusItem>
      <StatusItem $ml={23}><Access /></StatusItem>
      <StatusItem $ml={2}>Специальные возможности: не поддерживаются</StatusItem>
      <StatusRight>
        <ViewBtn>
          <svg width="17" height="12" viewBox="0 0 17 12"><path d="M8 1H.5v10H8zM9 1h7.500v10H9" fill="none" stroke="#666" /></svg>
        </ViewBtn>
        <ViewBtn $active>
          <svg width="16" height="12" viewBox="0 0 16 12"><path d="M.5.5h15v11H.5zM3 4h10M3 6.500h10M3 9h10" fill="none" stroke="#666" /></svg>
        </ViewBtn>
        <ViewBtn>
          <svg width="18" height="12" viewBox="0 0 18 12"><path d="M.5.5h8v11h-8zM2 4h5M2 7h5" fill="none" stroke="#666" /><circle cx="13" cy="7" r="4" fill="none" stroke="#666" /></svg>
        </ViewBtn>
        <ZoomSign>−</ZoomSign>
        <Zoomer />
        <ZoomSign>+</ZoomSign>
        <StatusItem $ml={17}>98 %</StatusItem>
      </StatusRight>
    </StatusBar>

    <Taskbar>
      <StartBtn><WinLogo /></StartBtn>
      <Search><SearchIcon />Введите здесь текст для поиска</Search>
      <TaskView><TaskViewIcon /></TaskView>
      {SLOTS.map(s => (
        <Slot key={s.key} $on={s.on} $focus={s.focus}>
          {s.icon}
          {s.badge && <Badge>{s.badge}</Badge>}
        </Slot>
      ))}
      <Tray>
        <Weather><WindIcon /></Weather>
        <TrayText>-5°C</TrayText>
        <TrayText $size={16.4} $ml={14}>Ветер</TrayText>
        <TrayIcon $w={44} $ml={5}><svg width="16" height="9" viewBox="0 0 16 9"><path d="M1 8l7-7 7 7" fill="none" stroke="#111" /></svg></TrayIcon>
        <TrayIcon $w={20}><MeetIcon /></TrayIcon>
        <TrayIcon $w={34}><MicIcon /></TrayIcon>
        <TrayIcon $w={28}><CloudErr /></TrayIcon>
        <TrayIcon $w={32}><BatteryIcon /></TrayIcon>
        <TrayIcon $w={30}><WifiIcon /></TrayIcon>
        <TrayIcon $w={28}><VolumeIcon /></TrayIcon>
        <TrayText $size={13.6} $ml={11}>РУС</TrayText>
        <Clock>17:49<br />04.03.2022</Clock>
        <Notif>
          <NoteIcon />
          <NotifCount>15</NotifCount>
        </Notif>
      </Tray>
    </Taskbar>

    <Toast>
      <ToastHead>
        <OneDriveTile />
        OneDrive
        <ToastClose width="13" height="13" viewBox="0 0 14 14"><path d="M.5.5l13 13M13.500.5l-13 13" stroke="#666" /></ToastClose>
      </ToastHead>
      <ToastBody>
        <ToastCloud><Cloud /></ToastCloud>
        <div>
          <ToastTitle>Снимок экрана сохранен</ToastTitle>
          <ToastText>Снимок экрана добавлен в ваше<br />хранилище OneDrive.</ToastText>
        </div>
      </ToastBody>
    </Toast>
  </Screen>
)

export default App
